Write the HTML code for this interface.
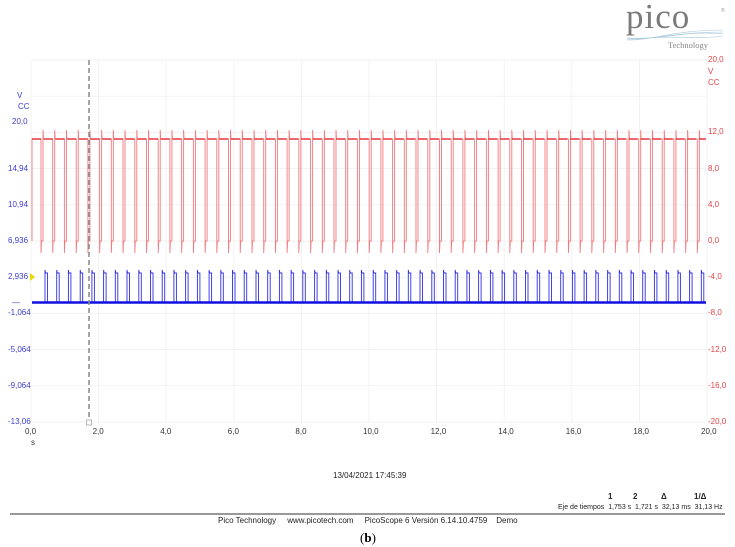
<!DOCTYPE html>
<html><head><meta charset="utf-8"><style>
body{margin:0;width:735px;height:547px;background:#fff;overflow:hidden;position:relative;font-family:"Liberation Sans",sans-serif}
.t{position:absolute;font-size:8px;white-space:nowrap}
.b{color:#3b3bd0}.r{color:#e0454a}
</style></head><body>
<div class="t" style="left:626px;top:-3px;font-family:'Liberation Serif',serif;font-size:35px;color:#7a7a7a;letter-spacing:1px">pico</div>
<div class="t" style="left:721px;top:8px;font-size:5px;color:#999">®</div>
<div class="t" style="left:668px;top:40px;font-family:'Liberation Serif',serif;font-size:8.5px;color:#888">Technology</div>
<svg style="position:absolute;left:625px;top:28px" width="100" height="14"><g fill="none" stroke="#a8c8dc" stroke-width="0.6"><path d="M2 12 C30 12 50 2 98 2"/><path d="M2 11 C35 11 55 4 98 4"/><path d="M2 10 C40 12 60 2 98 6"/><path d="M10 12 C40 6 70 12 98 8"/></g></svg>

<div class="t b" style="left:17px;top:91px">V</div>
<div class="t b" style="left:18px;top:102px">CC</div>
<div class="t r" style="left:708px;top:55px">20,0</div>
<div class="t r" style="left:708px;top:67px">V</div>
<div class="t r" style="left:708px;top:78px">CC</div>
<div id="labels"></div>
<svg id="plot" style="position:absolute;left:0;top:0" width="735" height="547"></svg>

<div class="t b" style="left:12px;top:298px">—</div>
<div class="t" style="left:31px;top:438px;font-size:8px;color:#333">s</div>
<div class="t" style="left:333px;top:471px;color:#222">13/04/2021 17:45:39</div>
<div class="t" style="left:608px;top:492px;font-weight:bold;color:#222">1</div>
<div class="t" style="left:633px;top:492px;font-weight:bold;color:#222">2</div>
<div class="t" style="left:661px;top:492px;font-weight:bold;color:#222">Δ</div>
<div class="t" style="left:694px;top:492px;font-weight:bold;color:#222">1/Δ</div>
<div class="t" style="left:558px;top:504px;font-size:7px;color:#222">Eje de tiempos&nbsp; 1,753 s&nbsp; 1,721 s&nbsp; 32,13 ms&nbsp; 31,13 Hz</div>
<div style="position:absolute;left:10px;top:513px;width:715px;height:1.5px;background:#999"></div>
<div class="t" style="left:218px;top:516px;color:#222">Pico Technology &nbsp;&nbsp;&nbsp; www.picotech.com &nbsp;&nbsp;&nbsp; PicoScope 6 Versión 6.14.10.4759 &nbsp;&nbsp; Demo</div>
<div class="t" style="left:360px;top:530px;font-family:'Liberation Serif',serif;font-size:13px;color:#000">(<b>b</b>)</div>
<script>
var s='',L='';
var x0=31,x1=707,y0=60,dy=36.2;
for(var i=0;i<=10;i++){var x=x0+i*(x1-x0)/10;s+='<line x1="'+x+'" y1="60" x2="'+x+'" y2="422" stroke="#eee" stroke-width="0.7"/>';
var lab=(i*2).toFixed(1).replace('.',',');L+='<div class="t" style="left:'+(x-6)+'px;top:427px;color:#333">'+lab+'</div>';}
for(var j=0;j<=10;j++){var y=y0+j*dy;s+='<line x1="31" y1="'+y+'" x2="707" y2="'+y+'" stroke="#eee" stroke-width="0.7"/>';}
var rl=['12,0','8,0','4,0','0,0','-4,0','-8,0','-12,0','-16,0','-20,0'];
var ll=['20,0','14,94','10,94','6,936','2,936','-1,064','-5,064','-9,064','-13,06'];
for(var k=0;k<9;k++){var y=y0+(k+2)*dy;
L+='<div class="t r" style="left:708px;top:'+(y-5)+'px">'+rl[k]+'</div>';
var yy=k==0?122:y;L+='<div class="t b" style="left:'+(k==8?8:(ll[k].length>4?8:12))+'px;top:'+(yy-5)+'px">'+ll[k]+'</div>';}
document.getElementById('labels').innerHTML=L;
var pr='M32 241 L32 139',pb='M32 303';var p=11.72;
for(var x=41;x<705;x+=p){var a=Math.round(x*10)/10;
pr+=' L'+(a-1)+' 139 L'+a+' 139 L'+a+' 253 L'+(a+0.5)+' 241 L'+(a+2)+' 241 L'+(a+2)+' 130 L'+(a+2.5)+' 139';
var b=a+4;pb+=' L'+b+' 303 L'+b+' 270 L'+(b+0.5)+' 273 L'+(b+2.5)+' 273 L'+(b+2.5)+' 303';}
pr+=' L706 139';pb+=' L706 303';
s+='<path d="'+pr+'" fill="none" stroke="#f07a7e" stroke-width="0.9"/>';
s+='<path d="'+pb+'" fill="none" stroke="#3030e0" stroke-width="0.9"/>';
s+='<line x1="32" y1="302.5" x2="706" y2="302.5" stroke="#1010e0" stroke-width="2.5"/>';
s+='<line x1="32" y1="139" x2="706" y2="139" stroke="#e8353a" stroke-width="1.5" stroke-dasharray="9 2.7"/>';
s+='<line x1="89" y1="60" x2="89" y2="420" stroke="#888" stroke-width="1.5" stroke-dasharray="5 3"/>';
s+='<rect x="86.5" y="420" width="5" height="5" fill="#fff" stroke="#999" stroke-width="0.7"/>';
s+='<polygon points="30,273 35,277 30,281" fill="#e8d800"/>';
document.getElementById('plot').innerHTML=s;
</script>
</body></html>
